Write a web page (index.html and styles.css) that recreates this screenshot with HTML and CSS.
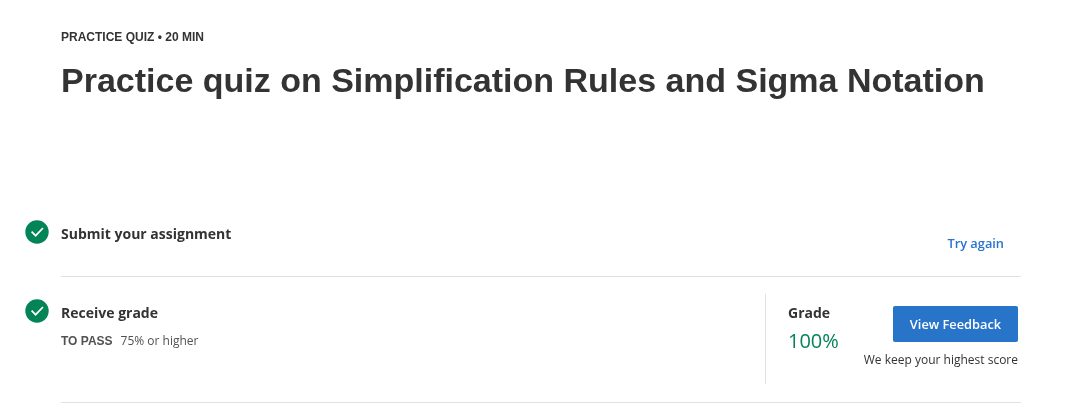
FILE: index.html
```html
<!DOCTYPE html>
<html lang="en">
<head>
<meta charset="utf-8">
<title>Practice quiz</title>
<link rel="stylesheet" href="styles.css">
</head>
<body>
<main class="page">
  <header class="header">
    <div class="eyebrow">PRACTICE QUIZ • 20 MIN</div>
    <h1 class="title">Practice quiz on Simplification Rules and Sigma Notation</h1>
  </header>
  <section class="row row-submit">
    <svg class="check" viewBox="0 0 24 24"><circle class="disc" cx="12" cy="12" r="11.7"/><path class="tick" d="M6.6 11.7l4 4 7.4-7.7"/></svg>
    <div class="body">
      <h2 class="step">Submit your assignment</h2>
      <a class="try">Try again</a>
    </div>
  </section>
  <section class="row row-grade">
    <svg class="check" viewBox="0 0 24 24"><circle class="disc" cx="12" cy="12" r="11.7"/><path class="tick" d="M6.6 11.7l4 4 7.4-7.7"/></svg>
    <div class="body">
      <div class="info">
        <h2 class="step">Receive grade</h2>
        <p class="pass"><strong class="pass-label">TO PASS</strong><span class="pass-value">75% or higher</span></p>
      </div>
      <div class="result">
        <div class="grade">
          <div class="step">Grade</div>
          <div class="score">100%</div>
        </div>
        <div class="feedback">
          <button class="button">View Feedback</button>
          <div class="note">We keep your highest score</div>
        </div>
      </div>
    </div>
  </section>
</main>
</body>
</html>
```
FILE: styles.css
```css
* { box-sizing: border-box; }
body { margin: 0; background: #fff; color: #333; font-family: "Open Sans", sans-serif; }
h1, h2, p { margin: 0; }
/* own layer: greyscale text smoothing */
.page { width: 1073px; padding: 29px 52px 0 0; will-change: transform; }
.header { height: 169px; padding-left: 61px; font-family: "Liberation Sans", Arial, sans-serif; }
.eyebrow { font-size: 12px; font-weight: 700; line-height: 16px; white-space: nowrap; }
.title { margin-top: 14px; font-size: 34px; font-weight: 700; line-height: 42px; white-space: nowrap; }
.row { display: flex; padding-left: 25px; }
.check { flex: none; width: 24px; height: 24px; margin: 22px 12px 0 0; }
.disc { fill: #038457; }
.tick { fill: none; stroke: #fff; stroke-width: 1.7; }
.body { display: flex; flex: 1; justify-content: space-between; border-bottom: 1px solid #e1e1e1; }
.row-submit { height: 79px; }
.row-grade { height: 126px; }
.step { font-size: 14px; font-weight: 700; line-height: 20px; }
.body > .step, .info { padding-top: 26px; }
.try { margin: 35px 17px 0 0; color: #2a73cc; font-size: 12.8px; font-weight: 600; line-height: 20px; }
.pass { display: flex; gap: 8px; margin-top: 8px; color: #525252; font-size: 12px; line-height: 20px; }
.pass-label { font-family: "Liberation Sans", Arial, sans-serif; }
.result { display: flex; width: 256px; height: 90px; margin-top: 17px; padding: 0 3px 0 22px; border-left: 1px solid #e1e1e1; justify-content: space-between; }
.grade { padding-top: 9px; }
.score { margin-top: 4px; color: #038457; font-size: 20px; line-height: 28px; }
.feedback { display: flex; flex-direction: column; align-items: flex-end; padding-top: 12px; }
.button { width: 125px; height: 36px; padding: 0; border: 0; border-radius: 2px; background: #2774c9; color: #fff; font: 600 12.8px/20px "Open Sans", sans-serif; }
.note { margin-top: 8px; font-size: 12px; line-height: 20px; white-space: nowrap; }
```
